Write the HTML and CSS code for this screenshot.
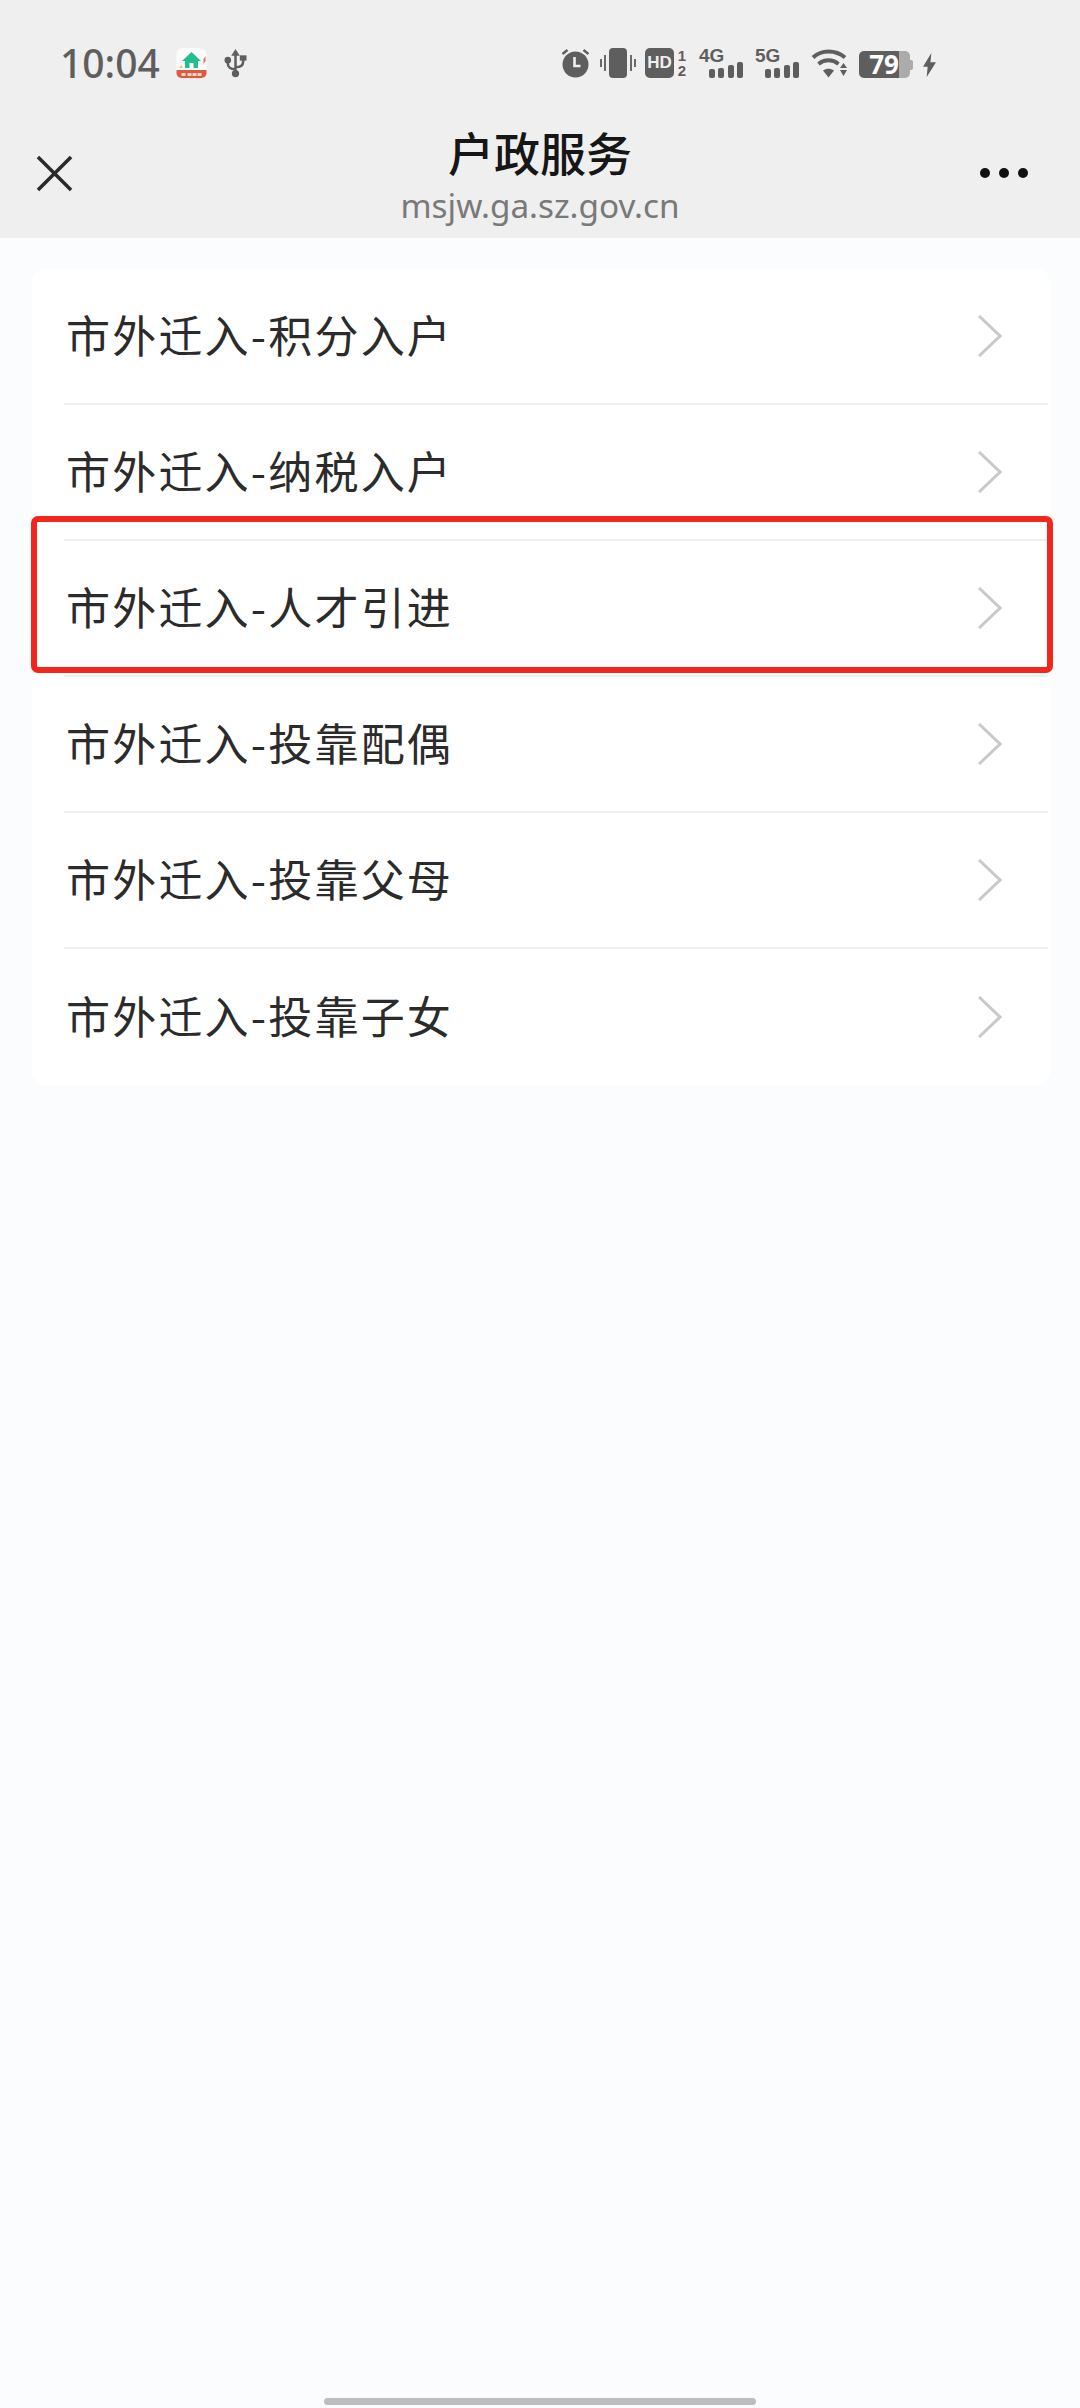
FILE: index.html
```html
<!DOCTYPE html>
<html lang="zh-CN">
<head>
    <meta charset="UTF-8">
    <meta name="viewport" content="width=device-width, initial-scale=1.0">
    <title>户政服务</title>
    <link rel="stylesheet" href="styles.css">
</head>
<body>
    <header class="header">
        <div class="status-bar">
            <div class="status-left">
                <span class="time">10:04</span>
                <svg class="app-icon" viewBox="0 0 30 30">
                    <rect width="30" height="30" rx="6" fill="#fbfbfb"/>
                    <path d="M0 22h30v3a5 5 0 0 1-5 5H5a5 5 0 0 1-5-5z" fill="#e2593a"/>
                    <path d="M15 4 L5.500 13 h3 v7 h13 v-7 h3 z" fill="#1fbf8f"/>
                    <rect x="13" y="15" width="4" height="5" fill="#fbfbfb"/>
                    <path d="M27 11l2-3v5l-2 3z" fill="#d9794a"/>
                    <path d="M3 20l2-3 1 3z" fill="#e9c14e"/>
                    <path d="M5 25h4v3H5zM11 25h4v3h-4zM16 25h4v3h-4zM21 25h4v3h-4z" fill="#f6d9cf"/>
                </svg>
                <svg class="usb-icon" viewBox="0 0 24 30">
                    <path d="M12 0.500l-4.500 7h9z" fill="#5e5e5e"/>
                    <path d="M12 6v19M12 21.500c-6 0-8-2.500-8-6v-3M12 19.500c6 0 8-2.500 8-6v-3" fill="none" stroke="#5e5e5e" stroke-width="2.600"/>
                    <circle cx="4" cy="12" r="3.400" fill="#5e5e5e"/>
                    <rect x="16.500" y="7" width="7" height="5.500" fill="#5e5e5e"/>
                    <circle cx="12" cy="26" r="3.800" fill="#5e5e5e"/>
                </svg>
            </div>
            <div class="status-right">
                <svg class="icon-alarm" viewBox="0 0 28 30">
                    <circle cx="14" cy="16.500" r="13" fill="#5e5e5e"/>
                    <path d="M13 9v9h6" fill="none" stroke="#efefef" stroke-width="2.600"/>
                    <path d="M1 6l5-4M27 6l-5-4" stroke="#5e5e5e" stroke-width="2.400"/>
                </svg>
                <svg class="icon-vibrate" viewBox="0 0 36 30">
                    <rect x="9" y="0" width="18" height="30" rx="4" fill="#5e5e5e"/>
                    <path d="M1 11v8M5 7v16M31 7v16M35 11v8" stroke="#6a6a6a" stroke-width="2"/>
                </svg>
                <div class="hd-group">
                    <span class="hd-badge">HD</span>
                    <span class="hd-nums"><span>1</span><span>2</span></span>
                </div>
                <div class="signal">
                    <span class="signal-label">4G</span>
                    <span class="bars"><i class="bar-1"></i><i class="bar-2"></i><i class="bar-3"></i><i class="bar-4"></i></span>
                </div>
                <div class="signal">
                    <span class="signal-label">5G</span>
                    <span class="bars"><i class="bar-1"></i><i class="bar-2"></i><i class="bar-3"></i><i class="bar-4"></i></span>
                </div>
                <svg class="icon-wifi" viewBox="0 0 36 30">
                    <path d="M1.500 9.500C10 1.500 24 1.500 33.500 9.500" fill="none" stroke="#5e5e5e" stroke-width="4"/>
                    <path d="M7 16c6-5 14-5 20 0" fill="none" stroke="#5e5e5e" stroke-width="3.800"/>
                    <path d="M11.500 22.500c3.500-2.500 7.500-2.500 11 0l-5.500 7z" fill="#5e5e5e"/>
                    <path d="M32 15l3.500 5h-7zM28.500 22h7l-3.500 6z" fill="#5e5e5e"/>
                </svg>
                <div class="battery">
                    <span class="battery-fill">79</span>
                    <span class="battery-rest"></span>
                    <span class="battery-cap"></span>
                </div>
                <svg class="icon-bolt" viewBox="0 0 14 26">
                    <path d="M9 0L0 15h5l-1 11 10-16H8z" fill="#5e5e5e"/>
                </svg>
            </div>
        </div>
        <div class="nav-bar">
            <svg class="icon-close" viewBox="0 0 38 38">
                <path d="M2 2l34 34M36 2L2 36" stroke="#2a2a2a" stroke-width="3.600"/>
            </svg>
            <div class="nav-title">
                <h1>户政服务</h1>
                <p>msjw.ga.sz.gov.cn</p>
            </div>
            <div class="nav-more"><i></i><i></i><i></i></div>
        </div>
    </header>

    <main class="content">
        <ul class="menu">
            <li class="menu-item"><div class="menu-row"><span>市外迁入-积分入户</span><svg class="chevron" viewBox="0 0 24 42"><path d="M1 1l21 20L1 41" /></svg></div></li>
            <li class="menu-item"><div class="menu-row"><span>市外迁入-纳税入户</span><svg class="chevron" viewBox="0 0 24 42"><path d="M1 1l21 20L1 41" /></svg></div></li>
            <li class="menu-item"><div class="menu-row"><span>市外迁入-人才引进</span><svg class="chevron" viewBox="0 0 24 42"><path d="M1 1l21 20L1 41" /></svg></div><div class="highlight"></div></li>
            <li class="menu-item"><div class="menu-row"><span>市外迁入-投靠配偶</span><svg class="chevron" viewBox="0 0 24 42"><path d="M1 1l21 20L1 41" /></svg></div></li>
            <li class="menu-item"><div class="menu-row"><span>市外迁入-投靠父母</span><svg class="chevron" viewBox="0 0 24 42"><path d="M1 1l21 20L1 41" /></svg></div></li>
            <li class="menu-item"><div class="menu-row"><span>市外迁入-投靠子女</span><svg class="chevron" viewBox="0 0 24 42"><path d="M1 1l21 20L1 41" /></svg></div></li>
        </ul>
    </main>

    <div class="home-bar"></div>
</body>
</html>
```

FILE: styles.css
```css
* {
    box-sizing: border-box;
}

body {
    margin: 0;
    height: 2408px;
    overflow: hidden;
    display: flex;
    flex-direction: column;
    background-color: #fbfcfe;
    font-family: "Noto Sans", "Noto Sans CJK SC", sans-serif;
}

.header {
    height: 238px;
    padding-top: 48px;
    background-color: #efefef;
    flex-shrink: 0;
}

.status-bar {
    display: flex;
    justify-content: space-between;
    align-items: center;
    height: 30px;
    padding: 0 144px 0 60px;
    color: #5e5e5e;
}

.status-left,
.status-right {
    display: flex;
    align-items: center;
}

.time {
    font-size: 39px;
    font-weight: 500;
    line-height: 30px;
    width: 99px;
}

.app-icon {
    width: 31px;
    height: 30px;
    margin-left: 17px;
}

.usb-icon {
    width: 23px;
    height: 30px;
    margin-left: 17px;
}

.icon-alarm {
    width: 29px;
    height: 30px;
}

.icon-vibrate {
    width: 36px;
    height: 30px;
    margin-left: 10px;
}

.hd-group {
    display: flex;
    align-items: center;
    margin-left: 9px;
}

.hd-badge {
    width: 29px;
    height: 30px;
    border-radius: 5px;
    background-color: #5e5e5e;
    color: #efefef;
    font-family: "Liberation Sans", sans-serif;
    font-size: 17px;
    font-weight: 700;
    line-height: 30px;
    text-align: center;
}

.hd-nums {
    display: flex;
    flex-direction: column;
    width: 10px;
    margin-left: 3px;
    font-family: "Liberation Sans", sans-serif;
    font-size: 15px;
    font-weight: 700;
    line-height: 15px;
    text-align: center;
}

.signal {
    position: relative;
    width: 44px;
    height: 30px;
    margin-left: 12px;
}

.signal-label {
    position: absolute;
    left: 0;
    top: -2px;
    font-family: "Liberation Sans", sans-serif;
    font-size: 19px;
    font-weight: 700;
    line-height: 20px;
}

.bars {
    position: absolute;
    right: 0;
    bottom: 0;
    display: flex;
    align-items: flex-end;
    gap: 3.500px;
}

.bars i {
    display: block;
    width: 6px;
    border-radius: 2px;
    background-color: #5e5e5e;
}

.bar-1 {
    height: 9px;
}

.bar-2 {
    height: 10px;
}

.bar-3 {
    height: 13px;
}

.bar-4 {
    height: 16px;
}

.icon-wifi {
    width: 37px;
    height: 30px;
    margin-left: 12px;
}

.battery {
    display: flex;
    align-items: center;
    height: 27px;
    margin: 3px 0 0 11px;
}

.battery-fill {
    width: 40px;
    height: 27px;
    border-radius: 5px 0 0 5px;
    background-color: #5e5e5e;
    color: #fff;
    font-size: 26px;
    font-weight: 700;
    line-height: 27px;
    text-align: right;
}

.battery-rest {
    width: 11px;
    height: 27px;
    border-radius: 0 5px 5px 0;
    background-color: #ababab;
}

.battery-cap {
    width: 3px;
    height: 10px;
    border-radius: 0 2px 2px 0;
    background-color: #ababab;
}

.icon-bolt {
    width: 13px;
    height: 26px;
    margin: 3px 0 0 10px;
}

.nav-bar {
    display: grid;
    grid-template-columns: 1fr auto 1fr;
    align-items: center;
    margin-top: 44px;
    padding: 0 36px;
}

.icon-close {
    width: 37px;
    height: 37px;
}

.nav-title {
    text-align: center;
}

.nav-title h1 {
    margin: 0;
    font-family: "Noto Sans CJK SC", sans-serif;
    font-size: 46px;
    font-weight: 500;
    line-height: 58px;
    color: #161616;
}

.nav-title p {
    margin: 6px 0 0;
    font-size: 33.300px;
    line-height: 38px;
    color: #797979;
}

.nav-more {
    display: flex;
    justify-content: flex-end;
    gap: 9px;
    margin-right: 16px;
}

.nav-more i {
    display: block;
    width: 10px;
    height: 10px;
    border-radius: 50%;
    background-color: #111;
}

.content {
    flex: 1;
    padding: 31px 30px 0 32px;
}

.menu {
    list-style: none;
    margin: 0;
    padding: 0 2px 0 32px;
    width: 1018px;
    background-color: #fff;
    border-radius: 14px;
}

.menu-item {
    position: relative;
    height: 136px;
}

.menu-row {
    display: flex;
    align-items: center;
    justify-content: space-between;
    height: 100%;
    padding: 0 46px 0 2px;
    border-bottom: 2px solid #efeff1;
    font-family: "Noto Sans CJK SC", sans-serif;
    font-size: 44px;
    letter-spacing: 2.200px;
    color: #2b2b2b;
}

.menu-row span {
    margin-bottom: 4px;
}

.menu-item:last-child .menu-row {
    border-bottom: none;
}

.chevron {
    width: 24px;
    height: 42px;
    fill: none;
    stroke: #c9c9c9;
    stroke-width: 3;
}

/* annotation box drawn over the third row */
.highlight {
    position: absolute;
    top: -25px;
    left: -33px;
    width: 1022px;
    height: 157px;
    border: 6px solid #f3261c;
    border-radius: 7px;
}

.home-bar {
    flex-shrink: 0;
    width: 432px;
    height: 7px;
    margin: 0 auto 3px;
    border-radius: 4px;
    background-color: #bdbec0;
}
```
